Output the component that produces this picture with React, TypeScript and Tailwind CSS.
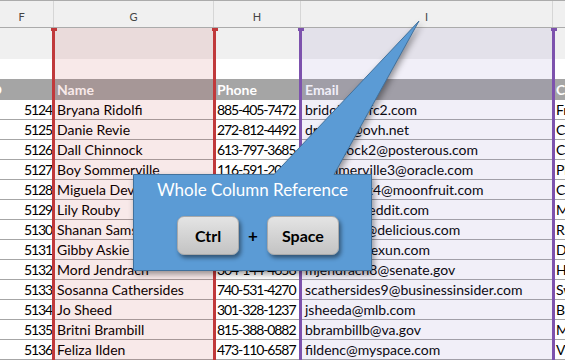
const rows = [
  ['5124', 'Bryana Ridolfi', '885-405-7472', 'bridolfi0@fc2.com', 'France'],
  ['5125', 'Danie Revie', '272-812-4492', 'drevie1@ovh.net', 'China'],
  ['5126', 'Dall Chinnock', '613-797-3685', 'dchinnock2@posterous.com', 'Canada'],
  ['5127', 'Boy Sommerville', '116-591-2064', 'bsommerville3@oracle.com', 'Philippines'],
  ['5128', 'Miguela Devereux', '205-318-7741', 'mdevereux4@moonfruit.com', 'China'],
  ['5129', 'Lily Rouby', '917-264-5508', 'lrouby5@reddit.com', 'Mexico'],
  ['5130', 'Shanan Samson', '618-402-9913', 'ssamson6@delicious.com', 'Russia'],
  ['5131', 'Gibby Askie', '433-587-2216', 'gaskie7@hexun.com', 'Denmark'],
  ['5132', 'Mord Jendrach', '304-144-4656', 'mjendrach8@senate.gov', 'Honduras'],
  ['5133', 'Sosanna Cathersides', '740-531-4270', 'scathersides9@businessinsider.com', 'Sweden'],
  ['5134', 'Jo Sheed', '301-328-1237', 'jsheeda@mlb.com', 'Brazil'],
  ['5135', 'Britni Brambill', '815-388-0882', 'bbrambillb@va.gov', 'Mexico'],
  ['5136', 'Feliza Ilden', '473-110-6587', 'fildenc@myspace.com', 'Vietnam'],
];

const cols = 'grid grid-cols-[64px_160px_87px_252px_60px]';

function Key({ label, w }: { label: string; w: string }) {
  return (
    <div
      className={`${w} h-[39px] flex items-center justify-center rounded-[7px] border border-[#a9a9a9] bg-gradient-to-b from-[#e4e4e4] to-[#c3c3c3] shadow-[2px_3px_4px_rgba(0,0,0,0.45)] text-[16px] font-bold text-black`}
    >
      {label}
    </div>
  );
}

export default function App() {
  return (
    <div className="relative w-[565px] h-[360px] overflow-hidden bg-white font-['Lato',sans-serif] text-[14px] text-black">
      <div className="ml-[-10px] w-[623px]">
        {/* column letters */}
        <div className={`${cols} h-[28px] bg-[#f0f0f0] border-t border-b border-[#ababab] text-[11px] text-[#444]`}>
          {['F', 'G', 'H', 'I', ''].map((l, i) => (
            <div key={i} className="flex justify-center pt-[10px] leading-none border-r border-[#d6d6d6]">
              {l}
            </div>
          ))}
        </div>

        {/* title rows */}
        <div className={`${cols} h-[31px] bg-[#f0f0f0]`}>
          <div /><div /><div /><div /><div />
        </div>
        <div className={`${cols} h-[20px] bg-white`}>
          <div /><div /><div /><div /><div />
        </div>

        {/* table header */}
        <div className={`${cols} h-[21px] leading-[21px] bg-[#a5a5a5] font-bold text-white`}>
          <div className="ml-[-3px]">ID</div>
          <div className="pl-[3px]">Name</div>
          <div className="pl-[3px]">Phone</div>
          <div className="pl-[4px]">Email</div>
          <div className="pl-[3px]">Country</div>
        </div>

        {rows.map((r) => (
          <div key={r[0]} className={`${cols} h-[20px] leading-[19px] border-b border-[#a6a6a6] whitespace-nowrap`}>
            <div className="text-right pr-[2px] tracking-[-1.1px]">{r[0]}</div>
            <div className="pl-[3px] overflow-hidden">{r[1]}</div>
            <div className="pl-[3px] tracking-[-1.1px] overflow-hidden">{r[2]}</div>
            <div className="pl-[4px] overflow-hidden">{r[3]}</div>
            <div className="pl-[3px] overflow-hidden">{r[4]}</div>
          </div>
        ))}
      </div>

      {/* column tints */}
      <div className="absolute left-[55px] top-[28px] w-[158px] h-[332px] bg-[rgba(176,8,8,0.09)]" />
      <div className="absolute left-[302px] top-[28px] w-[250px] h-[332px] bg-[rgba(115,95,185,0.1)]" />

      {/* selection borders */}
      <div className="absolute left-[52px] top-[28px] w-[3px] h-[332px] bg-[#c0393b]" />
      <div className="absolute left-[51px] top-[28px] w-[6px] h-[3px] bg-[#c0393b]" />
      <div className="absolute left-[213px] top-[28px] w-[3px] h-[332px] bg-[#c0393b]" />
      <div className="absolute left-[212px] top-[28px] w-[6px] h-[3px] bg-[#c0393b]" />
      <div className="absolute left-[299px] top-[28px] w-[3px] h-[332px] bg-[#7d52ad]" />
      <div className="absolute left-[298px] top-[28px] w-[6px] h-[3px] bg-[#7d52ad]" />
      <div className="absolute left-[552px] top-[28px] w-[3px] h-[332px] bg-[#7d52ad]" />
      <div className="absolute left-[551px] top-[28px] w-[6px] h-[3px] bg-[#7d52ad]" />

      {/* callout */}
      <svg
        className="absolute left-0 top-0 w-[565px] h-[360px] drop-shadow-[2px_3px_3px_rgba(0,0,0,0.4)]"
        viewBox="0 0 565 360"
      >
        <path
          d="M133.5 174.5 H274 L419 21 L334 174.5 H371.5 V270.5 H133.5 Z"
          fill="#5b9bd5"
          stroke="#41719c"
          strokeWidth="1"
        />
      </svg>
      <div className="absolute left-[133px] top-[174px] w-[239px] h-[97px] flex flex-col items-center pt-[5px]">
        <div className="text-[17px] leading-[22px] text-white">Whole Column Reference</div>
        <div className="mt-[15px] flex items-center pl-[11px]">
          <Key label="Ctrl" w="w-[62px]" />
          <span className="mx-[9px] text-[17px] font-bold text-black">+</span>
          <Key label="Space" w="w-[72px]" />
        </div>
      </div>
    </div>
  );
}
